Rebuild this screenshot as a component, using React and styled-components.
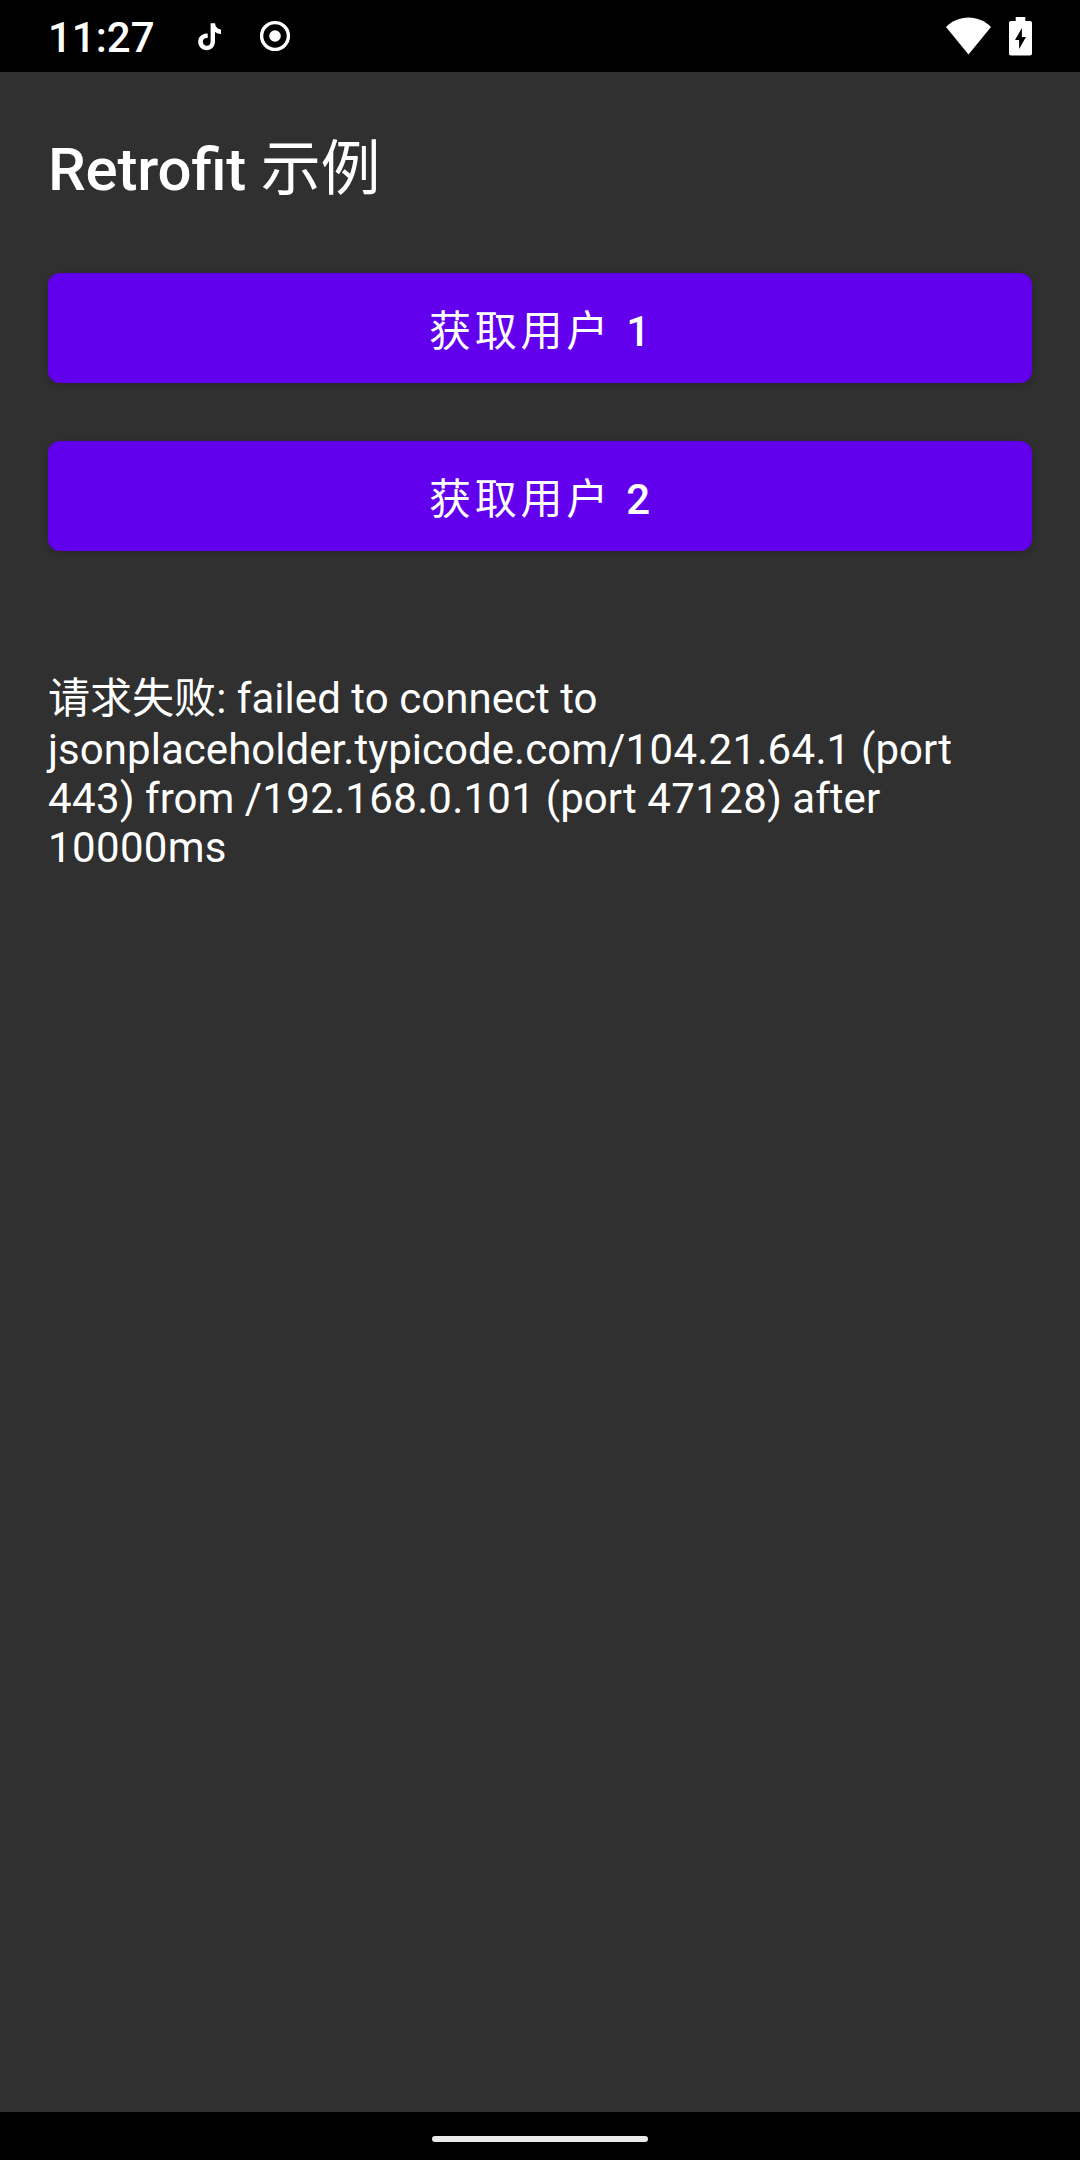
import React, { useState } from "react";
import styled, { createGlobalStyle } from "styled-components";

const GlobalStyle = createGlobalStyle`
  body {
    margin: 0;
    background: #303030;
    color: #ffffff;
    font-family: Roboto, "Noto Sans CJK SC", sans-serif;
  }
`;

const Screen = styled.div`
  display: flex;
  flex-direction: column;
  width: 1080px;
  height: 2160px;
  background: #303030;
`;

const StatusBar = styled.header`
  display: flex;
  align-items: center;
  justify-content: space-between;
  box-sizing: border-box;
  height: 72px;
  padding: 0 48px;
  background: #000000;
  svg {
    display: block;
  }
`;

const StatusGroup = styled.div`
  display: flex;
  align-items: center;
  gap: ${props => props.$gap}px;
`;

const Clock = styled.span`
  width: 113px;
  padding-top: 2px;
  font-size: 42px;
  font-weight: 500;
  line-height: 49px;
`;

const Content = styled.main`
  display: flex;
  flex: 1;
  flex-direction: column;
  padding: 48px 48px 0;
`;

const Title = styled.h1`
  margin: 0 0 66px;
  font-size: 60px;
  font-weight: 500;
  font-feature-settings: "liga" 1;
  letter-spacing: -0.2px;
  line-height: normal;
`;

const ButtonList = styled.div`
  display: flex;
  flex-direction: column;
  gap: 58px;
  margin-bottom: 113px;
`;

const Button = styled.button`
  display: flex;
  align-items: center;
  justify-content: center;
  height: 110px;
  padding: 0 0 2px 3px;
  border: none;
  border-radius: 12px;
  background: #6200ee;
  color: #ffffff;
  font-family: inherit;
  font-size: 42px;
  font-weight: 500;
  letter-spacing: 0.0893em;
  white-space: pre;
  box-shadow: 0 2px 6px rgba(0, 0, 0, 0.2);
  &:focus {
    outline: none;
  }
`;

const Han = styled.span`
  font-weight: 400;
`;

const Result = styled.p`
  margin: 0;
  font-size: 42px;
  letter-spacing: 0.04px;
  line-height: normal;
`;

const Digits = styled.span`
  letter-spacing: 0.36px;
`;

const NavigationBar = styled.footer`
  display: flex;
  align-items: center;
  justify-content: center;
  height: 48px;
  padding-top: 6px;
  box-sizing: border-box;
  background: #000000;
`;

const HomeHandle = styled.div`
  width: 216px;
  height: 6px;
  border-radius: 3px;
  background: #ebebeb;
`;

const NoteIcon = () => (
  <svg width="24" height="30" viewBox="0 -2 24 30" fill="#fff">
    <path d="M12.6 0.3H17C17.3 3.8 19.4 6.2 23 6.6V11C20.7 11 18.7 10.3 17 9.1V18.2C17 23.7 13.4 27.2 8.6 27.2C3.8 27.2 0.2 23.6 0.2 18.8C0.2 13.7 4.3 10 9.7 10.5V15C6.9 14.4 4.8 16.2 4.8 18.7C4.8 21 6.5 22.7 8.7 22.7C11.1 22.7 12.6 21 12.6 18.4Z" />
  </svg>
);

const RecordIcon = () => (
  <svg width="32" height="32" viewBox="0 0 32 32">
    <circle cx="16" cy="16" r="13.4" fill="none" stroke="#fff" strokeWidth="3.4" />
    <circle cx="16" cy="16" r="5.8" fill="#fff" />
  </svg>
);

const WifiIcon = () => (
  <svg width="45" height="38" viewBox="0 0 45 38" fill="#fff">
    <path d="M22.5 37.5L0 10C6 4 14 0.5 22.5 0.5C31 0.5 39 4 45 10Z" />
  </svg>
);

const BatteryIcon = () => (
  <svg width="23" height="39" viewBox="0 0 23 39" fill="#fff">
    <path
      fillRule="evenodd"
      d="M6.7 0H16.3V4H21C22.2 4 23 4.8 23 6V36.6C23 37.8 22.2 38.6 21 38.6H2C0.8 38.6 0 37.8 0 36.6V6C0 4.8 0.8 4 2 4H6.7ZM12.9 11L6 23H10.1V32L17 20H12.9Z"
    />
  </svg>
);

const USERS = [1, 2];

export default function App() {
  const [result] = useState(
    "请求失败: failed to connect to jsonplaceholder.typicode.com/104.21.64.1 (port 443) from /192.168.0.101 (port 47128) after 10000ms"
  );

  return (
    <>
      <GlobalStyle />
      <Screen lang="zh-CN">
        <StatusBar>
          <StatusGroup $gap={37}>
            <Clock>11:27</Clock>
            <NoteIcon />
            <RecordIcon />
          </StatusGroup>
          <StatusGroup $gap={18}>
            <WifiIcon />
            <BatteryIcon />
          </StatusGroup>
        </StatusBar>
        <Content>
          <Title>
            Retrofit <Han>示例</Han>
          </Title>
          <ButtonList>
            {USERS.map(id => (
              <Button key={id}>
                <span>
                  <Han>获取用户</Han> {id}
                </span>
              </Button>
            ))}
          </ButtonList>
          <Result>
            {result
              .split(/(\d+)/)
              .map((part, i) => (i % 2 ? <Digits key={i}>{part}</Digits> : part))}
          </Result>
        </Content>
        <NavigationBar>
          <HomeHandle />
        </NavigationBar>
      </Screen>
    </>
  );
}
